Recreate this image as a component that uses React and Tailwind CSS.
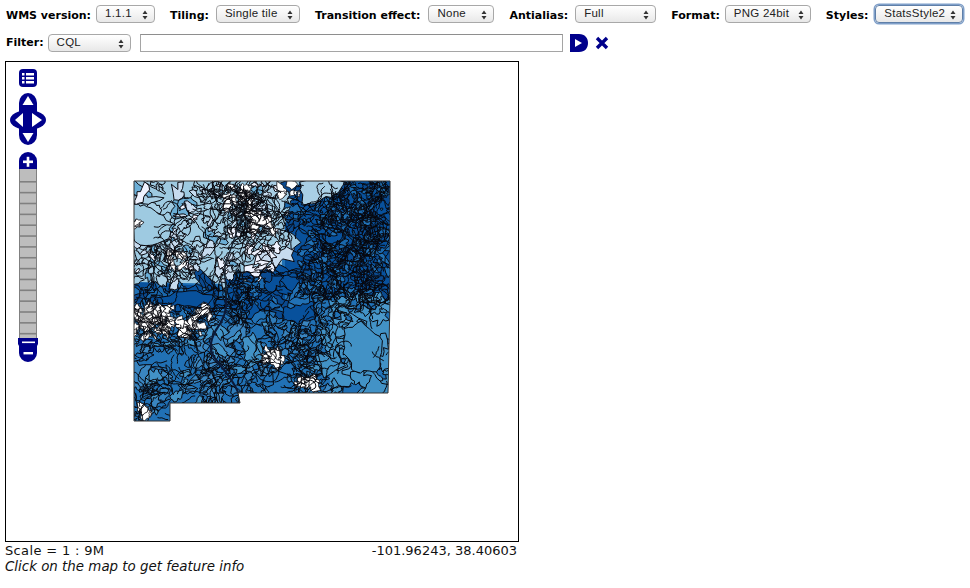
import React, { useMemo } from 'react';

const NAVY = '#00008b';
const LIGHTS = ['#9ecae1', '#a9cfe5', '#c6dbef', '#9ecae1', '#a9cfe5', '#6baed6', '#eff3ff'];
const DARKS = ['#08519c', '#2171b5', '#08519c', '#0a4a90', '#2171b5', '#1a68ad'];
const MIDS = ['#2171b5', '#4292c6', '#2171b5', '#3a85c0', '#2f7cba'];
const SOFT = ['#4292c6', '#4292c6', '#2171b5', '#4a98cb'];

const OUTLINE = '134,181 390,181 390,300 388,393 238,393 240,403 170,403 170,421 134,421';

// busy patches of the map, [x, y, radius, white share]
const HOT = [
  [240, 205, 34, 0.16], [262, 222, 20, 0.3], [172, 258, 26, 0.04], [222, 195, 18, 0.12],
  [152, 322, 28, 0.85], [190, 328, 18, 0.6], [205, 312, 10, 0.6], [272, 357, 13, 0.7],
  [305, 378, 12, 0.35], [345, 225, 42, 0.02], [372, 200, 22, 0.03], [330, 280, 28, 0.02],
  [368, 285, 22, 0.02], [240, 290, 22, 0.1], [300, 345, 25, 0.02], [150, 390, 14, 0.02],
  [210, 378, 18, 0.01], [145, 412, 9, 0.5],
];

// spots where the fill is mostly white, [x, y, spread, count]
const WHITE_SPOTS = [
  [152, 322, 20, 46], [190, 328, 11, 18], [205, 312, 6, 8], [272, 357, 8, 14],
  [308, 382, 9, 9], [145, 412, 6, 6], [262, 222, 12, 12], [238, 196, 12, 9],
  [290, 190, 9, 5], [138, 222, 3, 3], [172, 258, 14, 6],
];

const FEATURES = [
  ['300,181 346,181 338,192 318,202 303,206', '#a9cfe5'],
  ['134,205 150,207 172,222 168,240 140,246 134,240', '#9ecae1'],
  ['283,308 300,306 314,302 316,320 298,323 283,320', '#08519c'],
  ['243,340 252,333 262,345 263,360 250,368 244,358', '#4292c6'],
  ['345,330 362,322 382,340 378,372 355,372 343,352', '#4292c6'],
  ['315,355 335,348 345,365 325,378', '#4292c6'],
  ['155,298 190,290 225,300 225,308 190,306 160,305', '#08519c'],
];

function hotAt(x, y) {
  let sum = 0;
  HOT.forEach(([hx, hy, r]) => {
    const d = Math.hypot(x - hx, y - hy) / r;
    if (d < 1.4) sum += Math.exp(-d * d * 1.6);
  });
  return sum;
}

function paletteAt(x, y) {
  if (y < 283 - (x > 230 ? 10 : 0) && x < 285 + (y - 181) * 0.1) return LIGHTS;
  if (y < 295 && x >= 285) return DARKS;
  if (y < 312 && x < 285) return DARKS;
  if (x > 330) return SOFT;
  return MIDS;
}

function buildMap() {
  let seed = 48271;
  const rnd = () => {
    seed = (seed * 16807) % 2147483647;
    return seed / 2147483647;
  };

  const makeBlob = (x, y, r) => {
    const stretch = 0.3 + rnd() * 0.55;
    const turn = rnd() * Math.PI;
    const n = 12 + Math.floor(rnd() * 10);
    const p1 = rnd() * 6;
    const p2 = rnd() * 6;
    const pts = [];
    for (let k = 0; k < n; k++) {
      const a = (k / n) * Math.PI * 2;
      const rr = r * (1 + 0.3 * Math.sin(a * 2 + p1) + 0.2 * Math.sin(a * 5 + p2) + (rnd() - 0.5) * 0.35);
      const px = Math.cos(a) * rr;
      const py = Math.sin(a) * rr * stretch;
      pts.push(
        `${(x + px * Math.cos(turn) - py * Math.sin(turn)).toFixed(1)},${(y + px * Math.sin(turn) + py * Math.cos(turn)).toFixed(1)}`
      );
    }
    return pts.join(' ');
  };

  const blobs = [];
  for (let i = 0; i < 9000 && blobs.length < 1200; i++) {
    const x = 134 + rnd() * 256;
    const y = 181 + rnd() * 240;
    const sum = hotAt(x, y);
    if (rnd() > 0.14 + sum * 0.8) continue;
    const r = (3 + rnd() * rnd() * 20) / (1 + sum * 1.4);
    const pal = paletteAt(x, y);
    blobs.push({ r, fill: pal[Math.floor(rnd() * pal.length)], pts: makeBlob(x, y, r) });
  }
  blobs.sort((a, b) => b.r - a.r);

  const features = FEATURES.map(([raw, fill]) => {
    const c = raw.split(' ').map((s) => s.split(',').map(Number));
    const pts = [];
    c.forEach((p, i) => {
      const q = c[(i + 1) % c.length];
      for (let t = 0; t < 5; t++) {
        pts.push(
          `${(p[0] + ((q[0] - p[0]) * t) / 5 + (rnd() - 0.5) * 3).toFixed(1)},${(p[1] + ((q[1] - p[1]) * t) / 5 + (rnd() - 0.5) * 3).toFixed(1)}`
        );
      }
    });
    return { fill, pts: pts.join(' ') };
  });

  const whites = [];
  WHITE_SPOTS.forEach(([sx, sy, spread, count]) => {
    for (let i = 0; i < count; i++) {
      const x = sx + (rnd() - 0.5) * spread * 2;
      const y = sy + (rnd() - 0.5) * spread * 1.5;
      whites.push(makeBlob(x, y, 2.5 + rnd() * 4.5));
    }
  });

  // loose contour lines on top
  const walks = [];
  for (let i = 0; i < 12000 && walks.length < 620; i++) {
    let x = 134 + rnd() * 256;
    let y = 181 + rnd() * 240;
    if (rnd() > 0.08 + hotAt(x, y) * 0.6) continue;
    let dir = rnd() * Math.PI * 2;
    const len = 5 + Math.floor(rnd() * 14);
    let d = `M${x.toFixed(1)} ${y.toFixed(1)}`;
    for (let k = 0; k < len; k++) {
      dir += (rnd() - 0.5) * 1.5;
      x += Math.cos(dir) * 2.2;
      y += Math.sin(dir) * 2.2;
      d += `L${x.toFixed(1)} ${y.toFixed(1)}`;
    }
    walks.push(d);
  }
  return { blobs, features, whites, walks };
}

function StateMap() {
  const { blobs, features, whites, walks } = useMemo(buildMap, []);
  return (
    <svg className="absolute inset-0 w-[512px] h-[479px] blur-[0.3px]" viewBox="6 62 512 479">
      <defs>
        <clipPath id="state">
          <polygon points={OUTLINE} />
        </clipPath>
      </defs>
      <g clipPath="url(#state)">
        <rect x="134" y="181" width="256" height="240" fill="#2171b5" />
        <polygon points="134,181 300,181 285,225 280,285 134,282" fill="#9ecae1" />
        <polygon points="300,181 390,181 390,300 285,295 285,225" fill="#08519c" />
        <polygon points="134,282 285,290 285,312 134,305" fill="#08519c" />
        <polygon points="330,300 390,300 388,393 330,393" fill="#4292c6" />
        {blobs.map((b, i) => (
          <polygon key={i} points={b.pts} fill={b.fill} stroke="#08080e" strokeWidth="1" />
        ))}
        {features.map((f, i) => (
          <polygon key={i} points={f.pts} fill={f.fill} stroke="#08080e" strokeWidth="1" />
        ))}
        {whites.map((pts, i) => (
          <polygon key={i} points={pts} fill="#fff" stroke="#08080e" strokeWidth="0.8" />
        ))}
        <path d={walks.join('')} fill="none" stroke="#08080e" strokeWidth="1" />
        <path d="M226 298 C228 312 222 322 216 330 C208 344 210 352 216 360 C224 370 232 378 238 392" fill="none" stroke="#0b1a3a" strokeWidth="2.2" />
        <path d="M245 205 C240 225 232 245 226 262 C222 275 228 290 226 298" fill="none" stroke="#15202e" strokeWidth="1.4" />
      </g>
      <polygon points={OUTLINE} fill="none" stroke="#333" strokeWidth="1" />
    </svg>
  );
}

function PanZoom() {
  const ticks = [];
  for (let y = 181; y < 338; y += 10.85) ticks.push(y);
  return (
    <svg className="absolute left-0 top-0 w-[50px] h-[310px]" viewBox="6 62 50 310">
      {/* layer switcher */}
      <rect x="19" y="69" width="18" height="18" rx="4" fill={NAVY} />
      {[73, 77, 81].map((y) => (
        <g key={y} fill="#fff">
          <rect x="22" y={y} width="2.5" height="2.5" />
          <rect x="26" y={y} width="8" height="2.5" />
        </g>
      ))}
      {/* pan control */}
      <path d="M19 103 a9 10 0 0 1 18 0 V135 a9 10 0 0 1 -18 0 Z" fill={NAVY} />
      <ellipse cx="28" cy="120" rx="18" ry="10" fill={NAVY} />
      <path d="M28 96 L33.5 105 H22.5 Z" fill="#fff" />
      <path d="M28 142 L33.5 133 H22.5 Z" fill="#fff" />
      <path d="M15 120 L23 113 V127 Z" fill="#fff" />
      <path d="M42 120 L32 113 V127 Z" fill="#fff" />
      {/* zoom bar */}
      <rect x="19" y="168" width="18" height="172" fill="#bdbdbd" />
      <rect x="19" y="168" width="1" height="172" fill="#808080" />
      <rect x="36" y="168" width="1" height="172" fill="#808080" />
      {ticks.map((y) => (
        <rect key={y} x="19" y={y} width="18" height="1.6" fill="#808080" />
      ))}
      <path d="M19 169 V161 a9 9 0 0 1 18 0 V169 Z" fill={NAVY} />
      <rect x="23" y="160.5" width="10" height="2.6" fill="#fff" />
      <rect x="26.7" y="156.8" width="2.6" height="10" fill="#fff" />
      <path d="M18 338 H38 V344 L37 346 V353 a9 9 0 0 1 -18 0 V346 L18 344 Z" fill={NAVY} />
      <rect x="22" y="341.5" width="13" height="1.6" fill="#fff" />
      <rect x="23.5" y="352" width="9.5" height="2.4" fill="#fff" />
    </svg>
  );
}

function Arrows() {
  return (
    <svg width="6" height="10" viewBox="0 0 6 10" className="absolute right-[6px] top-[3.5px]">
      <path d="M3 0.5 L5.5 4 H0.5 Z M3 9.5 L0.5 6 H5.5 Z" fill="#333" />
    </svg>
  );
}

function FakeSelect({ value, width, focus }) {
  return (
    <div
      className={`relative h-[18px] rounded-[4px] border bg-gradient-to-b from-white via-[#f4f4f4] to-[#e8e8e8] pl-[8px] text-[11.5px] leading-[15px] tracking-[0.25px] text-[#222] ${
        focus ? 'border-[#5f7fa8] shadow-[0_0_0_1.5px_#7f9fc9]' : 'border-[#a8a8a8]'
      }`}
      style={{ width, fontFamily: '"Liberation Sans", sans-serif' }}
    >
      {value}
      <Arrows />
    </div>
  );
}

const toolbar = [
  { label: 'WMS version:', value: '1.1.1', width: 59, gap: 'gap-[5px]' },
  { label: 'Tiling:', value: 'Single tile', width: 84, gap: 'gap-[7px]' },
  { label: 'Transition effect:', value: 'None', width: 66, gap: 'gap-[8px]' },
  { label: 'Antialias:', value: 'Full', width: 81, gap: 'gap-[7px]' },
  { label: 'Format:', value: 'PNG 24bit', width: 86, gap: 'gap-[5px]' },
  { label: 'Styles:', value: 'StatsStyle2', width: 88, gap: 'gap-[7px]', focus: true },
];

export default function App() {
  return (
    <div className="w-[970px] h-[588px] bg-white overflow-hidden text-black" style={{ fontFamily: '"DejaVu Sans", sans-serif' }}>
      <div className="flex items-center gap-[15px] pl-[6px] pt-[5px]">
        {toolbar.map((t) => (
          <div key={t.label} className={`flex items-center ${t.gap}`}>
            <span className="font-bold text-[11px] leading-[14px] whitespace-nowrap mt-[3px]">{t.label}</span>
            <FakeSelect value={t.value} width={t.width} focus={t.focus} />
          </div>
        ))}
      </div>

      <div className="flex items-center pl-[6px] pt-[11px] h-[29px] mb-[9px]">
        <span className="font-bold text-[11px] leading-[14px] mr-[4px]">Filter:</span>
        <FakeSelect value="CQL" width={83} />
        <div className="ml-[9px] w-[423px] h-[18px] border border-[#a5a5a5] border-t-[#8e8e8e] bg-white" />
        <svg width="18" height="18" viewBox="0 0 18 18" className="ml-[7px]">
          <path d="M0 0 H9 C15 0 18 4 18 9 C18 14 15 18 9 18 H0 Z M5 5 V13 L12 9 Z" fill={NAVY} fillRule="evenodd" />
        </svg>
        <svg width="14" height="14" viewBox="0 0 14 14" className="ml-[7px]">
          <path d="M2 2 L12 12 M12 2 L2 12" stroke={NAVY} strokeWidth="3.4" />
        </svg>
      </div>

      <div className="relative ml-[5px] w-[514px] h-[481px] border border-black bg-white">
        <StateMap />
        <PanZoom />
      </div>

      <div className="ml-[5px] w-[512px] text-[13px] leading-[16px] pt-[1px] text-[#111]">
        <div className="flex justify-between">
          <span className="tracking-[0.35px]">Scale = 1 : 9M</span>
          <span>-101.96243, 38.40603</span>
        </div>
        <div className="italic text-[13.4px]">Click on the map to get feature info</div>
      </div>
    </div>
  );
}
